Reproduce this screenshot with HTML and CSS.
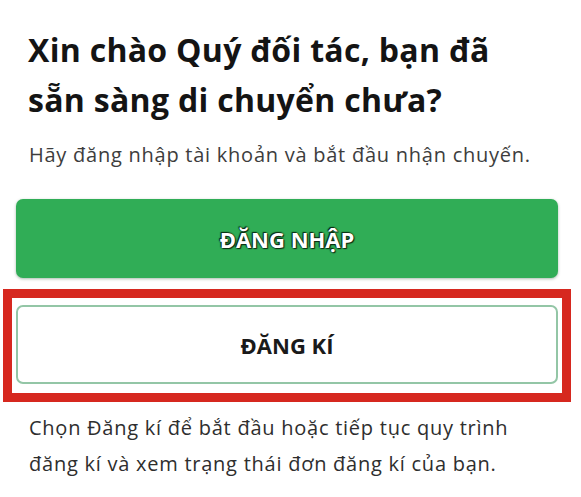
FILE: index.html
```html
<!DOCTYPE html>
<html lang="vi">
<head>
<meta charset="utf-8">
<link rel="stylesheet" href="styles.css">
</head>
<body>
<main class="screen">
  <h1 class="title">Xin chào Quý đối tác, bạn đã<br>sẵn sàng di chuyển chưa?</h1>
  <p class="subtitle">Hãy đăng nhập tài khoản và bắt đầu nhận chuyến.</p>
  <div class="actions">
    <button class="btn btn-primary">ĐĂNG NHẬP</button>
    <div class="highlight">
      <button class="btn btn-outline">ĐĂNG KÍ</button>
    </div>
  </div>
  <p class="note">Chọn Đăng kí để bắt đầu hoặc tiếp tục quy trình<br>đăng kí và xem trạng thái đơn đăng kí của bạn.</p>
</main>
</body>
</html>
```

FILE: styles.css
```css
* { box-sizing: border-box; }
html, body { margin: 0; padding: 0; background: #fff; }
body { width: 581px; height: 497px; overflow: hidden; }

.screen {
  display: flex;
  flex-direction: column;
  padding: 25px 0 0 0;
}

.title {
  margin: 0;
  padding: 0 10px 0 28px;
  font-family: "Open Sans", "Noto Sans", sans-serif;
  font-weight: 700;
  font-size: 32px;
  line-height: 50px;
  color: #141414;
  letter-spacing: 0.3px;
}

.subtitle {
  margin: 17px 0 0 0;
  padding: 0 10px 0 29px;
  font-family: "Open Sans", Roboto, sans-serif;
  font-size: 20px;
  line-height: 26px;
  color: #3d3d3d;
  letter-spacing: 0.75px;
}

.actions {
  display: flex;
  flex-direction: column;
  margin-top: 31px;
}

.btn {
  display: flex;
  align-items: center;
  justify-content: center;
  width: 542px;
  height: 79px;
  margin: 0 0 0 16px;
  border-radius: 7px;
  font-family: "Open Sans", "Noto Sans", sans-serif;
  font-weight: 700;
  font-size: 22px;
  cursor: pointer;
}

.btn-primary {
  background: #30ad56;
  border: none;
  color: #fff;
  box-shadow: 0 1px 3px rgba(0, 60, 20, 0.35);
  text-shadow: 0 0 2px #0b2a12, 0 0 1px #0b2a12, 1px 1px 1px #0b2a12, -1px -1px 1px #0b2a12;
}

.highlight {
  margin: 11px 0 0 3px;
  width: 568px;
  height: 113px;
  border: 9px solid #d6281f;
  padding: 7px 0 0 4px;
}

.btn-outline {
  margin: 0;
  background: #fff;
  border: 2px solid #93c6a6;
  color: #1a1a1a;
}

.note {
  margin: 8px 0 0 0;
  padding: 0 10px 0 29px;
  font-family: "Open Sans", Roboto, sans-serif;
  font-size: 20px;
  line-height: 36px;
  color: #2e2e2e;
  letter-spacing: 0.75px;
}
```
